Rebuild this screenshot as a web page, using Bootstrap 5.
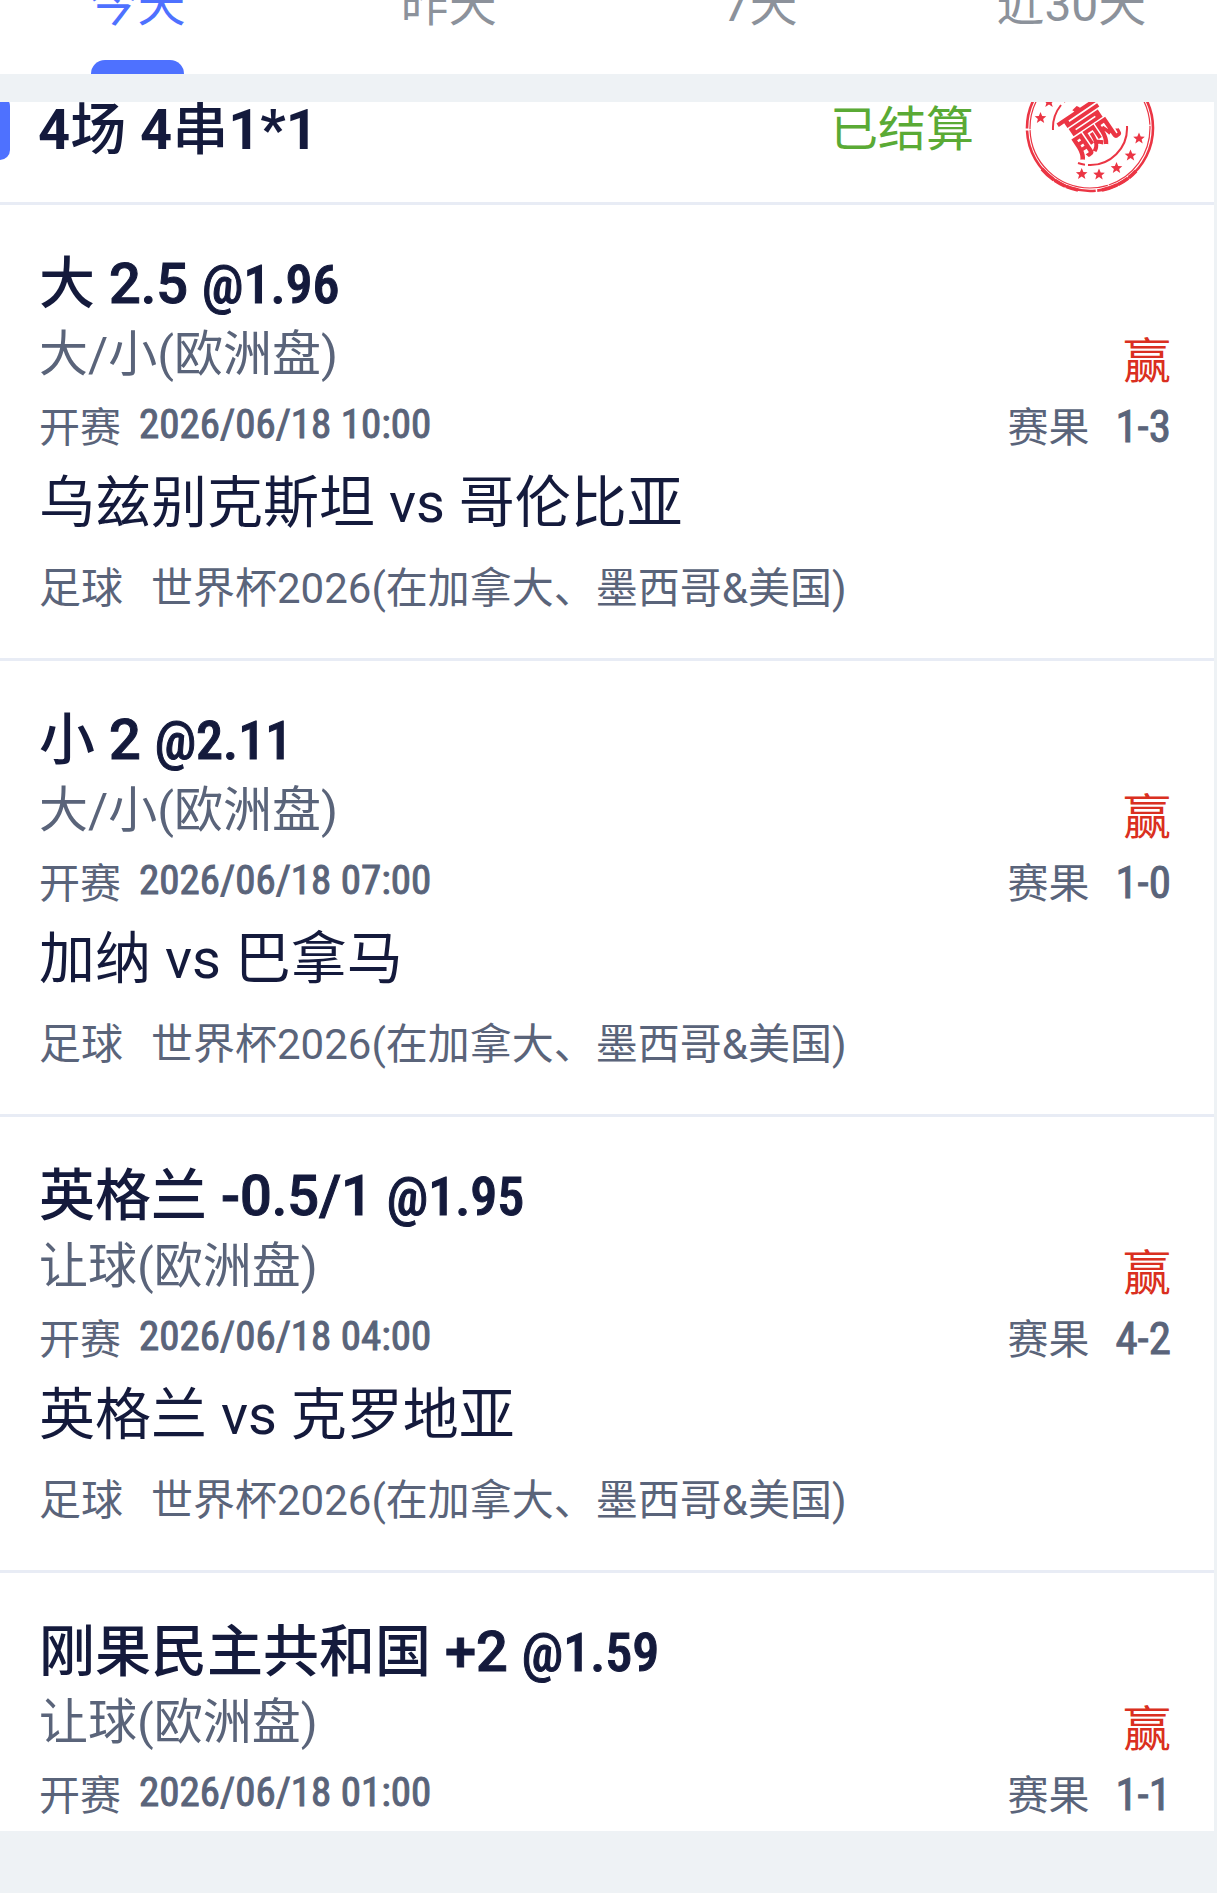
<!DOCTYPE html>
<html lang="zh-CN">
<head>
<meta charset="utf-8">
<meta name="viewport" content="width=device-width, initial-scale=1">
<title>注单记录</title>
<link href="https://cdn.jsdelivr.net/npm/bootstrap@5.3.0/dist/css/bootstrap.min.css" rel="stylesheet">
<style>
  body { background: #eef2f5; color: #141a3c; font-family: Roboto, "Noto Sans CJK SC", sans-serif; }
  .din { font-family: "Roboto Condensed", Roboto, sans-serif; -webkit-text-stroke: 1px currentColor; }
  .latin { -webkit-text-stroke: 1px currentColor; }
  .tab-strip { margin: -64px -10px 0 -18px; }
  .tab-strip .nav-link { height: 138px; padding: 0; font-size: 48px; line-height: 138px; color: #8c929b; position: relative; }
  .tab-strip .nav-link.active { color: #4e71ff; }
  .tab-strip .nav-link.active::after { content: ""; position: absolute; left: 50%; bottom: 0; width: 93px; height: 14px; margin-left: -47px; border-radius: 14px 14px 0 0; background: #4e71ff; }
  .slip-list { margin-top: 28px; margin-right: 3px; }
  .slip-head { height: 148px; margin-top: -48px; padding: 0 58px 0 0; }
  .slip-marker { width: 10px; height: 64px; margin-right: 28px; border-radius: 0 14px 14px 0; background: #4e71ff; }
  .slip-name { font-size: 56px; font-weight: 500; line-height: 76px; padding-top: 4px; }
  .slip-name b { font-weight: 700; }
  .slip-state { font-size: 48px; line-height: 76px; padding-top: 4px; color: #5aaa35; margin-right: 50px; }
  .slip-leg { border-top: 3px solid #e8ecf5; padding: 43px 43px 40px 39px; }
  .leg-pick { font-size: 56px; font-weight: 500; line-height: 72px; }
  .leg-pick .din { font-size: 54px; line-height: 54px; }
  .leg-market { font-size: 49px; line-height: 70px; }
  .leg-win { font-size: 48px; line-height: 56px; color: #da2f20; }
  .leg-meta { height: 76px; font-size: 41px; line-height: 76px; }
  .leg-meta time { line-height: 68px; }
  .leg-score { font-size: 45px; line-height: 74px; }
  .leg-teams { font-size: 56px; line-height: 74px; }
  .leg-league { font-size: 42px; line-height: 58px; margin-top: 20px; }
  .slate { color: #5a647a; }
  .gap-time { gap: 18px; }
  .gap-score { gap: 26px; }
  .gap-league { gap: 28px; }
  .foot-band { height: 62px; }
</style>
</head>
<body>
<div class="d-flex flex-column vh-100 overflow-hidden">
  <header class="bg-white overflow-hidden flex-shrink-0">
    <nav class="nav nav-fill tab-strip flex-nowrap" aria-label="日期">
      <a class="nav-link nav-item w-25 active" href="#" aria-current="page">今天</a>
      <a class="nav-link nav-item w-25" href="#">昨天</a>
      <a class="nav-link nav-item w-25" href="#">7天</a>
      <a class="nav-link nav-item w-25" href="#">近30天</a>
    </nav>
  </header>

  <main class="slip-list bg-white overflow-hidden flex-grow-1">
    <div class="slip-head d-flex align-items-center">
      <div class="slip-marker"></div>
      <h1 class="slip-name mb-0 me-auto"><b>4</b>场 <b>4</b>串<b>1*1</b></h1>
      <span class="slip-state">已结算</span>
      <svg width="132" height="132" viewBox="-66 -66 132 132" fill="none" stroke="#eb3544" role="img" aria-label="赢">
        <defs><path id="star" d="M0-6 1.700-2 5.800-1.800 2.600.9 3.700 5 0 2.600-3.700 5-2.600.9-5.800-1.800-1.700-2Z" fill="#eb3544" stroke="none"/></defs>
        <circle r="63" stroke-width="2.6" stroke-dasharray="58 1.5 32 1.5 25 2 14 1 60 2 70 1.5 90 2"/>
        <path d="M-48 41A63 63 0 0 0-12 62M12 62A63 63 0 0 0 46 43" stroke-width="3.6" stroke-dasharray="16 1 12 1"/>
        <circle r="60" stroke-width="1.2" stroke-dasharray="75 1 110 1"/>
        <path d="M37-2A37 37 0 0 1-2 37M-5 36.700A37 37 0 0 1-12 35M-37 2A37 37 0 0 1-29-23M-26-26A37 37 0 0 1-2-37" stroke-width="2"/>
        <use href="#star" x="-8.300" y="46"/><use href="#star" x="9" y="46.500"/><use href="#star" x="26.500" y="40"/>
        <use href="#star" x="40.500" y="27.500"/><use href="#star" x="49" y="10.500"/>
        <use href="#star" x="-49.500" y="-10"/><use href="#star" x="-41" y="-26"/><use href="#star" x="-27" y="-39"/>
        <text transform="rotate(-34)" x="-1" y="19" text-anchor="middle" font-family="Noto Sans CJK SC, sans-serif" font-size="52" font-weight="700" fill="#eb3544" stroke="none">赢</text>
      </svg>
    </div>

    <section class="slip-leg">
      <div class="leg-pick">大 <span class="latin">2.5</span> <span class="din">@1.96</span></div>
      <div class="d-flex justify-content-between slate">
        <div>
          <div class="leg-market">大/小(欧洲盘)</div>
          <div class="leg-meta d-flex gap-time"><span>开赛</span><time class="din">2026/06/18 10:00</time></div>
        </div>
        <div class="d-flex flex-column justify-content-end text-end">
          <div class="leg-win">赢</div>
          <div class="leg-meta d-flex gap-score"><span>赛果</span><span class="din leg-score">1-3</span></div>
        </div>
      </div>
      <div class="leg-teams">乌兹别克斯坦 vs 哥伦比亚</div>
      <div class="leg-league slate d-flex gap-league"><span>足球</span><span>世界杯2026(在加拿大、墨西哥&amp;美国)</span></div>
    </section>

    <section class="slip-leg">
      <div class="leg-pick">小 <span class="latin">2</span> <span class="din">@2.11</span></div>
      <div class="d-flex justify-content-between slate">
        <div>
          <div class="leg-market">大/小(欧洲盘)</div>
          <div class="leg-meta d-flex gap-time"><span>开赛</span><time class="din">2026/06/18 07:00</time></div>
        </div>
        <div class="d-flex flex-column justify-content-end text-end">
          <div class="leg-win">赢</div>
          <div class="leg-meta d-flex gap-score"><span>赛果</span><span class="din leg-score">1-0</span></div>
        </div>
      </div>
      <div class="leg-teams">加纳 vs 巴拿马</div>
      <div class="leg-league slate d-flex gap-league"><span>足球</span><span>世界杯2026(在加拿大、墨西哥&amp;美国)</span></div>
    </section>

    <section class="slip-leg">
      <div class="leg-pick">英格兰 <span class="latin">-0.5/1</span> <span class="din">@1.95</span></div>
      <div class="d-flex justify-content-between slate">
        <div>
          <div class="leg-market">让球(欧洲盘)</div>
          <div class="leg-meta d-flex gap-time"><span>开赛</span><time class="din">2026/06/18 04:00</time></div>
        </div>
        <div class="d-flex flex-column justify-content-end text-end">
          <div class="leg-win">赢</div>
          <div class="leg-meta d-flex gap-score"><span>赛果</span><span class="din leg-score">4-2</span></div>
        </div>
      </div>
      <div class="leg-teams">英格兰 vs 克罗地亚</div>
      <div class="leg-league slate d-flex gap-league"><span>足球</span><span>世界杯2026(在加拿大、墨西哥&amp;美国)</span></div>
    </section>

    <section class="slip-leg">
      <div class="leg-pick">刚果民主共和国 <span class="latin">+2</span> <span class="din">@1.59</span></div>
      <div class="d-flex justify-content-between slate">
        <div>
          <div class="leg-market">让球(欧洲盘)</div>
          <div class="leg-meta d-flex gap-time"><span>开赛</span><time class="din">2026/06/18 01:00</time></div>
        </div>
        <div class="d-flex flex-column justify-content-end text-end">
          <div class="leg-win">赢</div>
          <div class="leg-meta d-flex gap-score"><span>赛果</span><span class="din leg-score">1-1</span></div>
        </div>
      </div>
    </section>
  </main>
  <div class="foot-band flex-shrink-0"></div>
</div>
<script src="https://cdn.jsdelivr.net/npm/bootstrap@5.3.0/dist/js/bootstrap.bundle.min.js"></script>
</body>
</html>
